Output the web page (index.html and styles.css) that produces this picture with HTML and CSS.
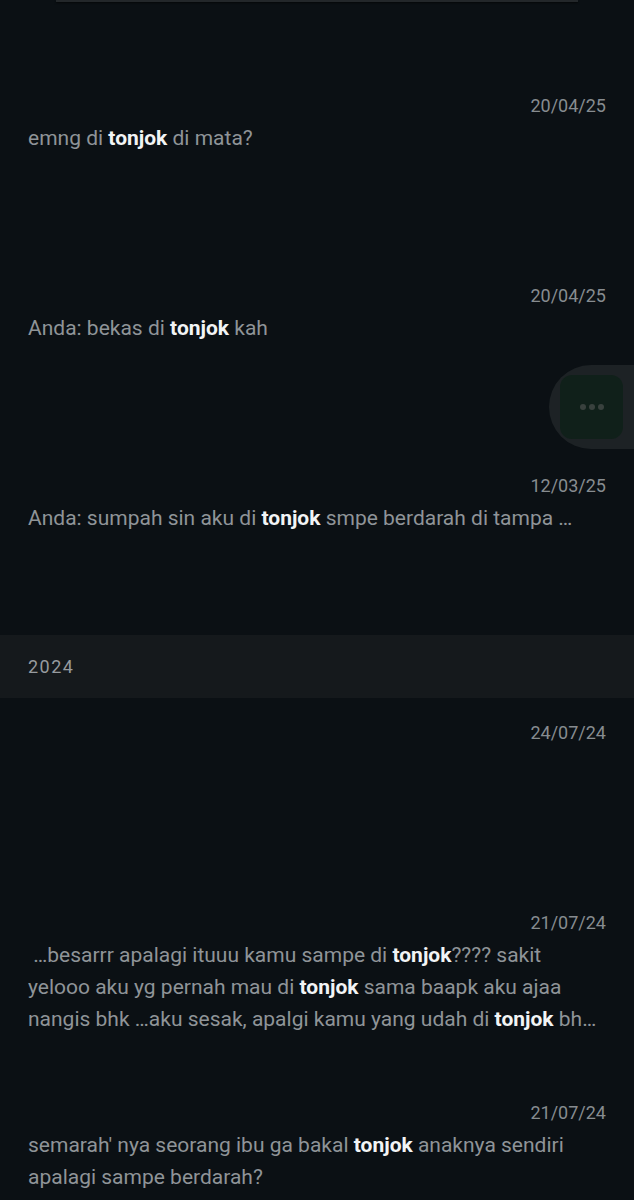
FILE: index.html
```html
<!DOCTYPE html>
<html lang="id">
<head>
    <meta charset="UTF-8">
    <meta name="viewport" content="width=device-width, initial-scale=1.0">
    <title>Cari pesan</title>
    <link rel="stylesheet" href="styles.css">
</head>
<body>
    <div class="top-bar"></div>

    <!-- 2025 results -->
    <ul class="result-list first">
        <li class="result">
            <div class="date">20/04/25</div>
            <p class="message">emng di <b>tonjok</b> di mata?</p>
        </li>
        <li class="result">
            <div class="date">20/04/25</div>
            <p class="message">Anda: bekas di <b>tonjok</b> kah</p>
        </li>
        <li class="result">
            <div class="date">12/03/25</div>
            <p class="message single">Anda: sumpah sin aku di <b>tonjok</b> smpe berdarah di tampa …</p>
        </li>
    </ul>

    <div class="year-header">2024</div>

    <ul class="result-list last">
        <li class="result">
            <div class="date">24/07/24</div>
            <p class="message"></p>
        </li>
        <li class="result">
            <div class="date">21/07/24</div>
            <p class="message clamp">&nbsp;…besarrr apalagi ituuu kamu sampe di <b>tonjok</b>???? sakit yelooo aku yg pernah mau di <b>tonjok</b> sama baapk aku ajaa nangis bhk …aku sesak, apalgi kamu yang udah di <b>tonjok</b> bhk sampe berdarah gitu</p>
        </li>
        <li class="result">
            <div class="date">21/07/24</div>
            <p class="message">semarah' nya seorang ibu ga bakal <b>tonjok</b> anaknya sendiri apalagi sampe berdarah?</p>
        </li>
    </ul>

    <!-- floating chat shortcut -->
    <div class="float-button">
        <div class="float-inner">
            <span class="dot"></span><span class="dot"></span><span class="dot"></span>
        </div>
    </div>
</body>
</html>
```

FILE: styles.css
```css
body {
    margin: 0;
    background-color: #0b1014;
    font-family: Roboto, "Noto Sans", sans-serif;
    color: #8f9498;
    position: relative;
}

.top-bar {
    height: 2px;
    margin: 0 56px 0 56px;
    background-color: #23272a;
    box-shadow: 0 1px 2px rgba(0, 0, 0, 0.6);
}

.result-list {
    list-style-type: none;
    margin: 0;
    padding: 0;
}

.result-list.first {
    padding-top: 69px;
}

.result {
    height: 190px;
    padding: 25px 28px 0;
    box-sizing: border-box;
}

.result-list.first .result:last-child {
    height: 184px;
}

.result-list.last .result:last-child {
    height: auto;
    padding-bottom: 6px;
}

.date {
    text-align: right;
    font-size: 18px;
    line-height: 20px;
    color: #878c90;
    margin-bottom: 6px;
}

.message {
    margin: 0;
    font-size: 21px;
    line-height: 32px;
}

.message b {
    color: #f2f4f5;
    font-weight: bold;
}

.message.single {
    white-space: nowrap;
    overflow: hidden;
}

.message.clamp {
    display: -webkit-box;
    -webkit-line-clamp: 3;
    -webkit-box-orient: vertical;
    overflow: hidden;
}

/* Year separator */
.year-header {
    height: 63px;
    display: flex;
    align-items: center;
    padding-left: 28px;
    background-color: #15191c;
    font-size: 18px;
    letter-spacing: 1.5px;
    color: #979b9f;
}

/* Floating button */
.float-button {
    position: absolute;
    left: 549px;
    top: 365px;
    width: 85px;
    height: 84px;
    border-radius: 42px 0 0 42px;
    background-color: #1d2225;
    display: flex;
    align-items: center;
    padding-left: 11px;
    box-sizing: border-box;
}

.float-inner {
    width: 63px;
    height: 64px;
    border-radius: 12px;
    background-color: #10201a;
    display: flex;
    justify-content: center;
    align-items: center;
    gap: 3px;
}

.dot {
    width: 6px;
    height: 6px;
    border-radius: 50%;
    background-color: #39413e;
}
```
